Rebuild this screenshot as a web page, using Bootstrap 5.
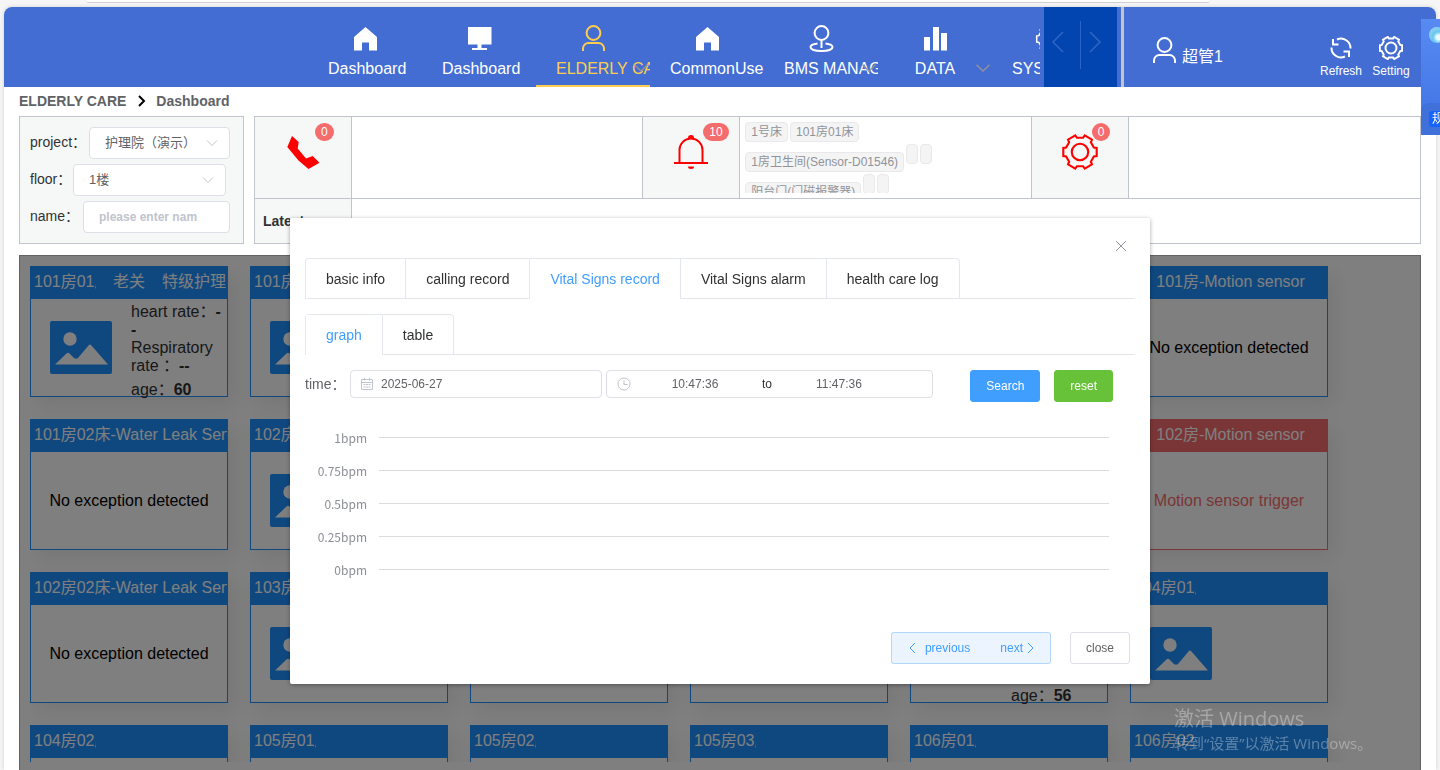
<!DOCTYPE html>
<html lang="en">
<head>
<meta charset="utf-8">
<meta name="viewport" content="width=device-width, initial-scale=1">
<title>Elderly Care - Dashboard</title>
<link href="https://cdn.jsdelivr.net/npm/bootstrap@5.3.0/dist/css/bootstrap.min.css" rel="stylesheet">
<style>
  body { font-family: "Liberation Sans", "Noto Sans CJK SC", sans-serif; font-size: 14px; line-height: 20px; color: #303133; background: #f6f6f7; }
  svg { display: block; fill: none; stroke: currentColor; stroke-width: 2; }
  .solid { fill: currentColor; stroke: none; }
  .top-strip { height: 7px; flex: none; }
  .top-pill { height: 3px; width: 78%; margin-left: 6%; background: #fff; border-bottom: 1px solid #cfcfcf; border-radius: 0 0 12px 12px; }
  .app-shell { margin: 0 4px; background: #fff; border-radius: 8px 8px 0 0; box-shadow: 0 0 4px rgba(0,0,0,.15); min-height: 0; }

  .app-header { height: 80px; background: #436dd3; border-radius: 8px 8px 0 0; color: #fff; flex: none; }
  .brand-space { flex: 0 0 304px; }
  .main-menu { min-width: 0; }
  .nav-item-box { flex: 0 0 114px; height: 80px; padding: 18px 20px 0; position: relative; overflow: hidden; color: #fff; font-size: 16px; text-align: center; text-decoration: none; white-space: nowrap; }
  .nav-item-box svg { width: 28px; height: 28px; margin: 0 auto 6px; }
  .nav-item-box.current { color: #ffcd4e; border-bottom: 2px solid #ffcd4e; }
  .nav-item-box .drop { position: absolute; right: 2px; top: 57px; width: 14px; height: 8px; margin: 0; color: #909399; stroke-width: 1.5; }
  .scroller { flex: 0 0 73px; background: #0345b0; margin: 0 4px; }
  .scroller button { flex: 1; border: 0; background: none; color: #2f65c4; padding: 0 8px 10px 0; display: flex; align-items: center; justify-content: center; }
  .scroller svg { stroke-width: 1.5; }
  .scroller .rule { width: 1px; height: 48px; margin-top: 14px; background: #2d63c4; }
  .user-area { flex: 0 0 315px; border-left: 3px solid #c0c4cc; padding: 0 20px 0 26px; }
  .user-name { font-size: 16px; }
  .user-badge { padding-top: 7px; }
  .user-name { padding-top: 12px; }
  .tool-link { color: #fff; font-size: 12px; line-height: 16px; text-decoration: none; width: 50px; text-align: center; padding-top: 20px; }
  .tool-link svg { margin: 0 auto 3px; }

  .page-body { padding: 0 15px; min-height: 0; }
  .crumbs { height: 28px; margin-bottom: 1px; color: #606266; font-weight: 700; flex: none; }
  .crumbs a { color: inherit; text-decoration: none; }
  .info-row { gap: 10px; }
  .filter-box { flex: 0 0 225px; border: 1px solid #c0c4cc; background: #f6f8f8; padding: 10px 13px 8px 10px; display: flex; flex-direction: column; gap: 5px; }
  .filter-box label { line-height: 30px; }
  .filter-box .form-select, .filter-box .form-control { height: 32px; border: 1px solid #dcdfe6; border-radius: 4px; font-size: 13px; color: #606266; padding: 0 15px; box-shadow: none; }
  .filter-box .form-select { background: #fff url("data:image/svg+xml,%3Csvg xmlns='http://www.w3.org/2000/svg' viewBox='0 0 12 12'%3E%3Cpath d='M1 3.5l5 5 5-5' fill='none' stroke='%23c0c4cc'/%3E%3C/svg%3E") no-repeat right 11px center / 12px 12px; }
  .filter-box .form-control { font-size: 12px; }
  .filter-box .form-control::placeholder { color: #c0c4cc; font-weight: 700; opacity: 1; }
  .filter-box .w-a { width: 141px; } .filter-box .w-b { width: 153px; } .filter-box .w-c { width: 147px; }

  .stat-grid { border: 1px solid #c0c4cc; display: grid; grid-template-columns: 97px 1fr 97px 1fr 97px 1fr; grid-template-rows: 82px 44px; min-width: 0; }
  .stat-grid > div { border-right: 1px solid #c0c4cc; border-bottom: 1px solid #c0c4cc; min-width: 0; min-height: 0; }
  .stat-grid > .last { border-right: 0; }
  .stat-grid > .bottom { border-bottom: 0; }
  .latest-key { background: #f6f8f8; }
  .latest-value { grid-column: span 5; }
  .stat-key { background: #f6f8f8; color: #f00; display: flex; align-items: center; justify-content: center; position: relative; }
  .stat-key .count { position: absolute; left: 60px; top: 6px; height: 18px; min-width: 18px; border-radius: 10px; padding: 0 6px; background: #f56c6c; color: #fff; font-size: 12px; line-height: 18px; text-align: center; }
  .stat-key svg { margin-bottom: 11px; }
  .tag-cell { padding: 5px; }
  .tag-list { height: 71px; overflow: hidden; display: flex; flex-direction: column; gap: 2px; }
  .tag-row { display: flex; gap: 2px; flex: none; }
  .tag-row.tall { height: 28px; }
  .room-tag { height: 20px; min-width: 12px; border: 1px solid #e9e9eb; background: #f4f4f5; color: #909399; border-radius: 4px; padding: 0 5px; font-size: 12px; line-height: 18px; white-space: nowrap; }

  .board { position: relative; border: 1px solid #c0c4cc; border-bottom: 0; padding: 10px 10px 8px; min-height: 0; margin-top: 11px; }
  .board::after { content: ""; position: absolute; inset: -1px; background: rgba(0,0,0,.5); }
  .room-list { height: 100%; overflow: hidden; display: grid; grid-template-columns: repeat(auto-fill, 198px); grid-auto-rows: 131px; gap: 22px; }
  .room { --tone: #1e90ff; border: 1px solid var(--tone); font-size: 16px; line-height: 18px; box-shadow: 6px 8px 20px rgba(0,0,0,.08); color: #303133; }
  .room.alert-tone { --tone: #f56c6c; }
  .room-head { background: var(--tone); color: #fff; height: 32px; line-height: 30px; padding-left: 3px; display: flex; gap: 17px; overflow: hidden; white-space: nowrap; }
  .room-head .bed { width: 62px; overflow: hidden; flex: none; }
  .room-body { height: 97px; }
  .room-pic { margin: 22px 19px 0; width: 62px; height: 53px; color: #1e90ff; flex: none; }
  .room-note { color: #000; display: flex; align-items: center; justify-content: center; }
  .room.alert-tone .room-note { color: #f56c6c; }
  .room-facts { padding-top: 4px; white-space: nowrap; }
  .room-facts div { margin-top: 6px; }
  .watermark { position: fixed; right: 64px; bottom: 15px; width: 202px; z-index: 1060; color: rgba(255,255,255,.32); font-family: "Open Sans", "Noto Sans CJK SC", sans-serif; pointer-events: none; white-space: nowrap; font-size: 15px; line-height: 24px; }
  .watermark strong { font-weight: 400; font-size: 20px; display: block; }

  .modal { pointer-events: none; }
  .modal-dialog { max-width: 860px; margin-top: 218px; }
  .modal-content { border: 0; border-radius: 2px; box-shadow: 0 1px 4px rgba(0,0,0,.35); padding: 40px 15px 20px; color: #303133; }
  .close-x { position: absolute; top: 20px; right: 21px; width: 16px; height: 16px; border: 0; padding: 0; background: none; color: #909399; }
  .close-x svg { stroke-width: 1; }
  .nav-tabs { --bs-nav-tabs-border-color: #e4e7ed; margin-bottom: 15px; }
  .nav-tabs .nav-item { border: 1px solid #e4e7ed; border-width: 1px 1px 0 0; margin-bottom: -1px; }
  .nav-tabs .nav-item:first-child { border-left-width: 1px; border-top-left-radius: 4px; }
  .nav-tabs .nav-item:last-child { border-top-right-radius: 4px; }
  .nav-tabs .nav-link, .nav-tabs .nav-link:hover { border: 0; margin: 0; border-bottom: 1px solid #e4e7ed; border-radius: 0; padding: 10px 20px 9px; color: #303133; background: none; }
  .nav-tabs .nav-link.active { color: #409eff; border-bottom-color: #fff; }
  .time-row { color: #606266; }
  .time-row label { width: 45px; line-height: 28px; }
  .pick { height: 28px; border: 1px solid #dcdfe6; border-radius: 4px; padding: 0 10px; margin-right: 4px; display: flex; align-items: center; color: #c0c4cc; font-size: 12px; }
  .pick input { border: 0; padding: 0; background: none; color: #606266; width: 128px; min-width: 0; outline: 0; }
  .pick-date { flex: 0 1 252px; } .pick-time { flex: 0 1 327px; }
  .pick svg { stroke-width: 1; flex: none; }
  .pick .between { width: 16px; color: #303133; text-align: center; }
  .time-actions { gap: 14px; margin: 0 22px 0 auto; }
  .btn { font-size: 12px; line-height: 16px; border-radius: 3px; padding: 7px 15px; }
  .btn-search { --bs-btn-bg: #409eff; --bs-btn-border-color: #409eff; --bs-btn-color: #fff; }
  .btn-reset { --bs-btn-bg: #67c23a; --bs-btn-border-color: #67c23a; --bs-btn-color: #fff; }
  .btn-step { --bs-btn-bg: #ecf5ff; --bs-btn-border-color: #b3d8ff; --bs-btn-color: #409eff; display: flex; align-items: center; gap: 8px; }
  .btn-step:first-child { border-right-color: #fff; }
  .btn-step:last-child { border-left: 0; gap: 2px; }
  .btn-plain { --bs-btn-bg: #fff; --bs-btn-border-color: #dcdfe6; --bs-btn-color: #606266; }
  .btn-step svg { width: 10px; height: 12px; stroke-width: 1; }
  .dialog-actions { padding-right: 5px; gap: 19px; }
  .chart-area { margin: 19px 0 46px; }
  .chart-row { height: 33px; display: flex; align-items: center; gap: 12px; padding-right: 26px; color: #8b8e94; font: 12px "Noto Sans CJK SC", sans-serif; }
  .chart-row span { width: 62px; text-align: right; }
  .chart-row i { flex: 1; height: 1px; background: #dcdcdc; }

  .side-dock { position: fixed; right: 0; top: 19px; width: 19px; height: 116px; z-index: 1060; overflow: hidden; background: linear-gradient(#588af2, #3f73e3); }
  .side-dock .face { width: 16px; height: 16px; border-radius: 50%; margin: 8px 0 0 8px; background: radial-gradient(circle at 60% 65%, #e8fbff 0 15%, #69c5ee 40%, #a9dcf5); }
  .side-dock .tray { margin-top: 60px; height: 32px; padding: 8px 0 0 8px; background: #4070da; border-radius: 8px 0 0 8px; }
  .side-dock .tray span { display: block; background: #1664ff; color: #fff; font-size: 12px; line-height: 16px; width: 24px; padding-left: 3px; border-radius: 3px; }
</style>
</head>
<body class="vh-100 overflow-hidden d-flex flex-column">

<svg class="d-none">
  <symbol id="i-home" viewBox="0 0 28 28"><path class="solid" d="M14.500 2 26 12v13.500H18v-8h-7v8H3V12z"/></symbol>
  <symbol id="i-screen" viewBox="0 0 28 28"><path class="solid" d="M3 2h23.500v17.500H16.500v3.500h5.500v2H7v-2h5.500v-3.500H3z"/></symbol>
  <symbol id="i-user" viewBox="0 0 28 28"><circle cx="14.500" cy="8" r="6.900"/><path d="M4 26v-2.500a5.500 5.500 0 0 1 5.500-5.500h10a5.500 5.500 0 0 1 5.500 5.500V26"/></symbol>
  <symbol id="i-place" viewBox="0 0 28 28"><circle cx="14.500" cy="8" r="6.900"/><path d="M14.500 15v8M10.500 18.500c-4 .5-7 1.500-7 3.500 0 2.300 4.500 4 11 4s11-1.700 11-4c0-2-3-3-7-3.500"/></symbol>
  <symbol id="i-bars" viewBox="0 0 28 28"><path class="solid" d="M3 12h6v13.500H3zM12 2h6v23.500h-6zM20 8h6v17.500h-6z"/></symbol>
  <symbol id="i-gear" viewBox="-18 -18 36 36"><circle r="7.800"/><path d="M15.800-3.900V3.900L13.100 4.300 10.300 9.200 11.300 11.700 4.500 15.700 2.900 13.500H-2.900L-4.500 15.700-11.300 11.700-10.300 9.200-13.100 4.300-15.800 3.900V-3.900L-13.100-4.300-10.300-9.200-11.300-11.700-4.500-15.700-2.900-13.500H2.900L4.500-15.700 11.300-11.700 10.300-9.200 13.100-4.300z"/></symbol>
  <symbol id="i-down" viewBox="0 0 14 8"><path d="M.5.8 7 7 13.500.8"/></symbol>
  <symbol id="i-pic" viewBox="0 0 62 53"><rect class="solid" width="62" height="53" rx="2"/><g fill="#fff" stroke="none"><circle cx="20" cy="18" r="6.700"/><path d="M5 43.500 16.500 32.500Q18 31 19.500 32.500L24 37Q26 38.500 28 37L38.500 24.500Q40 22.500 41.500 24.500L58 43.500z"/></g></symbol>
</svg>

<div class="top-strip"><div class="top-pill"></div></div>

<div class="app-shell d-flex flex-column flex-grow-1">
  <header class="app-header d-flex">
    <div class="brand-space"></div>
    <nav class="main-menu d-flex flex-grow-1 overflow-hidden">
      <a class="nav-item-box" href="#"><svg><use href="#i-home"/></svg>Dashboard</a>
      <a class="nav-item-box" href="#"><svg><use href="#i-screen"/></svg>Dashboard</a>
      <a class="nav-item-box current" href="#"><svg><use href="#i-user"/></svg>ELDERLY CARE<svg class="drop"><use href="#i-down"/></svg></a>
      <a class="nav-item-box" href="#"><svg><use href="#i-home"/></svg>CommonUse</a>
      <a class="nav-item-box" href="#"><svg><use href="#i-place"/></svg>BMS MANAGEMENT<svg class="drop"><use href="#i-down"/></svg></a>
      <a class="nav-item-box" href="#"><svg><use href="#i-bars"/></svg>DATA<svg class="drop"><use href="#i-down"/></svg></a>
      <a class="nav-item-box" href="#"><svg stroke-width="2"><use href="#i-gear"/></svg>SYSTEM MANAGEMENT</a>
    </nav>
    <div class="scroller d-flex">
      <button type="button" aria-label="Scroll left"><svg width="14" height="24" viewBox="0 0 14 24"><path d="M12 2 2 12l10 10"/></svg></button>
      <div class="rule"></div>
      <button type="button" aria-label="Scroll right"><svg width="14" height="24" viewBox="0 0 14 24"><path d="m2 2 10 10L2 22"/></svg></button>
    </div>
    <div class="user-area d-flex align-items-center">
      <div class="user-badge d-flex align-items-center"><svg width="28" height="28"><use href="#i-user"/></svg><span class="user-name ms-1">超管1</span></div>
      <a class="tool-link ms-auto" href="#"><svg width="24" height="24" viewBox="0 0 24 24"><path d="M2.500 11.500A9.500 9.500 0 0 0 16 20.500M21.500 12.500A9.500 9.500 0 0 0 8 3.500M4 3v5.500h5.500M20 21v-5.500h-5.500"/></svg>Refresh</a>
      <a class="tool-link" href="#"><svg width="24" height="24" viewBox="-17 -17 34 34"><g stroke-width="2.800"><circle r="7.800"/><path d="M15.800-3.900V3.900L13.100 4.300 10.300 9.200 11.300 11.700 4.500 15.700 2.900 13.500H-2.900L-4.500 15.700-11.300 11.700-10.300 9.200-13.100 4.300-15.800 3.900V-3.900L-13.100-4.300-10.300-9.200-11.300-11.700-4.500-15.700-2.900-13.500H2.900L4.500-15.700 11.300-11.700 10.300-9.200 13.100-4.300z"/></g></svg>Setting</a>
    </div>
  </header>

  <main class="page-body d-flex flex-column flex-grow-1">
    <nav class="crumbs d-flex align-items-center" aria-label="breadcrumb">
      <a href="#">ELDERLY CARE</a>
      <svg class="mx-2 text-black" width="14" height="12" viewBox="0 0 14 12"><path d="m5 1 5 5-5 5"/></svg>
      <a href="#">Dashboard</a>
    </nav>

    <div class="info-row d-flex">
      <form class="filter-box">
        <div class="d-flex justify-content-between"><label for="project">project：</label><select id="project" class="form-select w-a"><option>护理院（演示）</option></select></div>
        <div class="d-flex justify-content-between pe-1"><label for="floor">floor：</label><select id="floor" class="form-select w-b"><option>1楼</option></select></div>
        <div class="d-flex justify-content-between"><label for="pname">name：</label><input id="pname" type="text" class="form-control w-c" placeholder="please enter nam"></div>
      </form>
      <section class="stat-grid flex-grow-1">
        <div class="stat-key"><svg width="33" height="33" viewBox="0 0 33 33"><path class="solid" d="M5 0 11.700 6 10.700 12.500 19 22.500 25.700 20 32.500 26.700 21.500 33 11.500 24.500.3 11z"/></svg><span class="count">0</span></div>
        <div></div>
        <div class="stat-key"><svg width="36" height="36" viewBox="0 0 36 36"><path d="M1 29h34M6.500 29V16a11.500 11.500 0 0 1 23 0v13"/><path class="solid" d="M15 4a3 3 0 0 1 6 0zM15 32.500h6a3 2.500 0 0 1-6 0z"/></svg><span class="count">10</span></div>
        <div class="tag-cell">
          <div class="tag-list">
            <div class="tag-row"><span class="room-tag">1号床</span><span class="room-tag">101房01床</span></div>
            <div class="tag-row tall"><span class="room-tag align-self-end">1房卫生间(Sensor-D01546)</span><span class="room-tag"></span><span class="room-tag"></span></div>
            <div class="tag-row tall"><span class="room-tag align-self-end">阳台门(门磁报警器)</span><span class="room-tag"></span><span class="room-tag"></span></div>
          </div>
        </div>
        <div class="stat-key"><svg width="38" height="38"><use href="#i-gear"/></svg><span class="count">0</span></div>
        <div class="last"></div>
        <div class="bottom latest-key fw-bold d-flex align-items-center ps-2">Latest</div>
        <div class="bottom last latest-value"></div>
      </section>
    </div>

    <section class="board flex-grow-1">
      <div class="room-list">
        <article class="room">
          <div class="room-head"><span class="bed">101房01床</span><span>老关</span><span>特级护理</span></div>
          <div class="room-body d-flex"><svg class="room-pic"><use href="#i-pic"/></svg><div class="room-facts">heart rate：<b>-<br>-</b><br>Respiratory<br>rate ：<b>--</b><div>age：<b>60</b></div></div></div>
        </article>
        <article class="room"><div class="room-head"><span class="bed">101房02床</span></div><div class="room-body d-flex"><svg class="room-pic"><use href="#i-pic"/></svg></div></article>
        <article class="room"><div class="room-head"></div></article>
        <article class="room"><div class="room-head"></div></article>
        <article class="room"><div class="room-head"></div></article>
        <article class="room"><div class="room-head justify-content-center">101房-Motion sensor</div><div class="room-body room-note">No exception detected</div></article>

        <article class="room"><div class="room-head">101房02床-Water Leak Sensor</div><div class="room-body room-note">No exception detected</div></article>
        <article class="room"><div class="room-head"><span class="bed">102房01床</span></div><div class="room-body d-flex"><svg class="room-pic"><use href="#i-pic"/></svg></div></article>
        <article class="room"><div class="room-head"></div></article>
        <article class="room"><div class="room-head"></div></article>
        <article class="room"><div class="room-head"></div></article>
        <article class="room alert-tone"><div class="room-head justify-content-center">102房-Motion sensor</div><div class="room-body room-note">Motion sensor trigger</div></article>

        <article class="room"><div class="room-head">102房02床-Water Leak Sensor</div><div class="room-body room-note">No exception detected</div></article>
        <article class="room"><div class="room-head"><span class="bed">103房01床</span></div><div class="room-body d-flex"><svg class="room-pic"><use href="#i-pic"/></svg></div></article>
        <article class="room"><div class="room-head"></div></article>
        <article class="room"><div class="room-head"></div></article>
        <article class="room"><div class="room-head"></div><div class="room-body d-flex"><svg class="room-pic"><use href="#i-pic"/></svg><div class="room-facts">heart rate：<b>-<br>-</b><br>Respiratory<br>rate ：<b>--</b><div>age：<b>56</b></div></div></div></article>
        <article class="room"><div class="room-head"><span class="bed">104房01床</span></div><div class="room-body d-flex"><svg class="room-pic"><use href="#i-pic"/></svg></div></article>

        <article class="room"><div class="room-head"><span class="bed">104房02床</span></div></article>
        <article class="room"><div class="room-head"><span class="bed">105房01床</span></div></article>
        <article class="room"><div class="room-head"><span class="bed">105房02床</span></div></article>
        <article class="room"><div class="room-head"><span class="bed">105房03床</span></div></article>
        <article class="room"><div class="room-head"><span class="bed">106房01床</span></div></article>
        <article class="room"><div class="room-head"><span class="bed">106房02床</span></div></article>
      </div>
    </section>
  </main>
</div>

<div class="modal d-block" tabindex="-1" role="dialog" aria-label="Vital Signs record">
  <div class="modal-dialog">
    <div class="modal-content">
      <button type="button" class="close-x" aria-label="Close"><svg width="16" height="16" viewBox="0 0 16 16"><path d="m3 3 10 10M13 3 3 13"/></svg></button>
      <ul class="nav nav-tabs">
        <li class="nav-item"><a class="nav-link" href="#">basic info</a></li>
        <li class="nav-item"><a class="nav-link" href="#">calling record</a></li>
        <li class="nav-item"><a class="nav-link active" href="#">Vital Signs record</a></li>
        <li class="nav-item"><a class="nav-link" href="#">Vital Signs alarm</a></li>
        <li class="nav-item"><a class="nav-link" href="#">health care log</a></li>
      </ul>
      <ul class="nav nav-tabs">
        <li class="nav-item"><a class="nav-link active" href="#">graph</a></li>
        <li class="nav-item"><a class="nav-link" href="#">table</a></li>
      </ul>
      <form class="time-row d-flex align-items-start">
        <label for="day">time：</label>
        <div class="pick pick-date"><svg width="12" height="12" viewBox="0 0 12 12"><path d="M.5 1.500h11v10H.5zM.5 4.500h11M3.500 0v2.500M8.500 0v2.500M2.500 6.500h2M5 6.500h2M7.500 6.500h2M2.500 9h2M5 9h2M7.500 9h2"/></svg><input id="day" class="ms-2" type="text" value="2025-06-27"></div>
        <div class="pick pick-time"><svg width="14" height="14" viewBox="0 0 14 14"><circle cx="7" cy="7" r="6"/><path d="M7 3.500V7.500h3.500"/></svg><input class="text-center" type="text" value="10:47:36" aria-label="Start time"><span class="between">to</span><input class="text-center" type="text" value="11:47:36" aria-label="End time"></div>
        <div class="time-actions d-flex"><button type="button" class="btn btn-search">Search</button><button type="button" class="btn btn-reset">reset</button></div>
      </form>
      <div class="chart-area">
        <div class="chart-row"><span>1bpm</span><i></i></div>
        <div class="chart-row"><span>0.75bpm</span><i></i></div>
        <div class="chart-row"><span>0.5bpm</span><i></i></div>
        <div class="chart-row"><span>0.25bpm</span><i></i></div>
        <div class="chart-row"><span>0bpm</span><i></i></div>
      </div>
      <div class="dialog-actions d-flex justify-content-end">
        <div class="btn-group">
          <button type="button" class="btn btn-step"><svg viewBox="0 0 10 12"><path d="M8 1 3 6l5 5"/></svg>previous</button>
          <button type="button" class="btn btn-step">next<svg viewBox="0 0 10 12"><path d="m3 1 5 5-5 5"/></svg></button>
        </div>
        <button type="button" class="btn btn-plain">close</button>
      </div>
    </div>
  </div>
</div>

<div class="watermark"><strong>激活 Windows</strong>转到“设置”以激活 Windows。</div>
<aside class="side-dock"><div class="face"></div><div class="tray"><span>规</span></div></aside>

<script src="https://cdn.jsdelivr.net/npm/bootstrap@5.3.0/dist/js/bootstrap.bundle.min.js"></script>
</body>
</html>
